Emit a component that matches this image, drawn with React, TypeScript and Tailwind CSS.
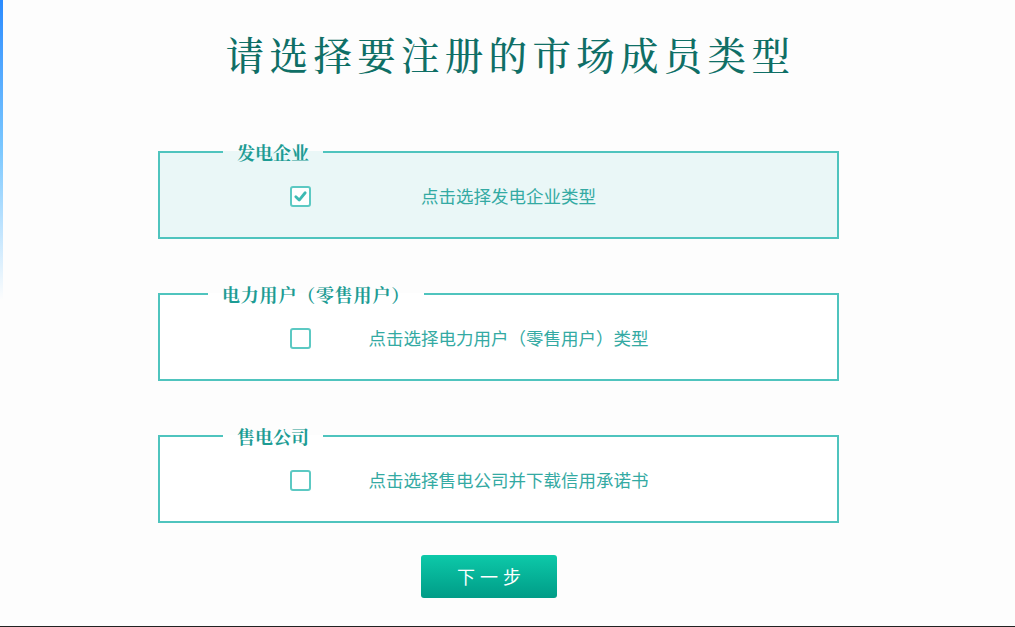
import { useState } from "react";

const cjkSans = "font-['Noto_Sans_CJK_SC','Noto_Sans',sans-serif]";
const cjkSerif = "font-['Noto_Serif_CJK_SC','Noto_Sans_CJK_SC',serif]";

type MemberType = {
  id: string;
  legend: string;
  legendClass: string;
  hint: string;
};

const memberTypes: MemberType[] = [
  { id: "gen", legend: "发电企业", legendClass: "ml-[63px]", hint: "点击选择发电企业类型" },
  { id: "user", legend: "电力用户（零售用户）", legendClass: "ml-[48px] tracking-[0.8px]", hint: "点击选择电力用户（零售用户）类型" },
  { id: "sale", legend: "售电公司", legendClass: "ml-[63px]", hint: "点击选择售电公司并下载信用承诺书" },
];

function CheckBox({ checked }: { checked: boolean }) {
  return (
    <span className="flex h-[21px] w-[21px] items-center justify-center rounded-[3px] border-2 border-[#5cc9c3] bg-white">
      {checked && (
        <svg viewBox="0 0 16 16" className="h-[15px] w-[15px]">
          <path d="M3 8.2 L6.6 11.8 L13 4" fill="none" stroke="#3dbab3" strokeWidth="3" strokeLinecap="round" strokeLinejoin="round" />
        </svg>
      )}
    </span>
  );
}

export default function App() {
  const [selected, setSelected] = useState("gen");

  return (
    <div className={`relative h-[627px] w-full overflow-hidden border-b border-[#222] bg-[#fdfdfd] ${cjkSans}`}>
      <div className="absolute left-0 top-0 h-[300px] w-[3px] bg-gradient-to-b from-[#2a8bff] via-[#7cc8ff] to-transparent" />

      <h1 className={`pt-[35px] pl-[6px] text-center text-[38.5px] font-medium leading-[38px] tracking-[5.3px] text-[#0f6f66] ${cjkSerif}`}>
        请选择要注册的市场成员类型
      </h1>

      <div className="mt-[69px] ml-[158px] flex w-[681px] flex-col gap-[45px]">
        {memberTypes.map((item) => {
          const active = selected === item.id;
          return (
            <fieldset
              key={item.id}
              onClick={() => setSelected(item.id)}
              className={`cursor-pointer border-2 border-[#4fc4be] pb-[6px] ${active ? "bg-[#eaf7f7]" : "bg-white"}`}
            >
              <legend className={`${item.legendClass} px-[14px] text-[18px] font-bold leading-[20px] text-[#1d9c94] ${cjkSerif}`}>
                {item.legend}
              </legend>
              <div className="flex h-[69px] items-center">
                <div className="ml-[130px]">
                  <CheckBox checked={active} />
                </div>
                <span className="ml-[9px] mr-[140px] flex-1 text-center text-[17.5px] text-[#34aaa3]">{item.hint}</span>
              </div>
            </fieldset>
          );
        })}
      </div>

      <button className="mt-[32px] ml-[421px] flex h-[43px] w-[136px] items-center justify-center rounded-[3px] bg-gradient-to-b from-[#0dc9a9] to-[#019c87] pl-[5px] text-[18px] tracking-[5px] text-white">
        下一步
      </button>
    </div>
  );
}
